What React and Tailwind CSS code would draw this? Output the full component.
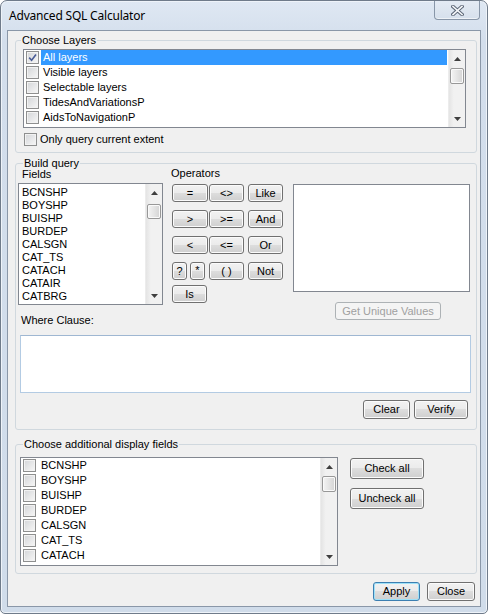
import React from "react";

const BTN =
  "flex items-center justify-center rounded-[3px] border border-[#707070] bg-[linear-gradient(#f2f2f2_0%,#ebebeb_50%,#dddddd_50%,#cfcfcf_100%)] shadow-[inset_0_0_0_1px_#fbfbfb] text-black leading-none";

function Btn({ className = "", children }) {
  return <div className={`${BTN} ${className}`}>{children}</div>;
}

function Check({ checked }) {
  return (
    <div className="w-[13px] h-[13px] shrink-0 border border-[#8e8f8f] bg-[linear-gradient(135deg,#d3d5d8,#f7f7f7)] shadow-[inset_0_0_0_1px_#f2f2f2] flex items-center justify-center">
      {checked && (
        <svg width="9" height="9" viewBox="0 0 9 9">
          <path d="M1.2 4.6 L3.6 7.2 L8 1.4" fill="none" stroke="#4a5c96" strokeWidth="1.6" />
        </svg>
      )}
    </div>
  );
}

function ScrollBar({ thumbTop = 1, thumbH = 16 }) {
  return (
    <div className="w-[17px] shrink-0 flex flex-col bg-[linear-gradient(90deg,#e4e4e4,#f1f1f1_30%,#f1f1f1)] border-l border-[#ececec]">
      <div className="h-[17px] flex items-center justify-center shrink-0">
        <svg width="7" height="4" viewBox="0 0 7 4">
          <polygon points="0,4 3.5,0 7,4" fill="#3f3f3f" />
        </svg>
      </div>
      <div
        className="mx-[1px] shrink-0 rounded-[2px] border border-[#989898] bg-[linear-gradient(90deg,#f4f4f4,#e6e6e6_45%,#d4d4d4)] shadow-[inset_0_0_0_1px_#fafafa]"
        style={{ marginTop: thumbTop, height: thumbH }}
      />
      <div className="flex-1" />
      <div className="h-[17px] flex items-center justify-center shrink-0">
        <svg width="7" height="4" viewBox="0 0 7 4">
          <polygon points="0,0 3.5,4 7,0" fill="#3f3f3f" />
        </svg>
      </div>
    </div>
  );
}

const layers = ["All layers", "Visible layers", "Selectable layers", "TidesAndVariationsP", "AidsToNavigationP"];
const fields = ["BCNSHP", "BOYSHP", "BUISHP", "BURDEP", "CALSGN", "CAT_TS", "CATACH", "CATAIR", "CATBRG"];
const dispFields = ["BCNSHP", "BOYSHP", "BUISHP", "BURDEP", "CALSGN", "CAT_TS", "CATACH"];

export default function App() {
  return (
    <div className="w-[488px] h-[614px] font-['Liberation_Sans',Arial,sans-serif] text-[11px] leading-[13px] text-black">
      <div className="w-[488px] h-[614px] flex flex-col border border-[#6f7b8a] rounded-t-[7px] rounded-b-[5px] bg-[linear-gradient(#dfe8f3,#d3deec_40px,#d0dcea)] shadow-[inset_0_0_0_1px_#eef3f9] overflow-hidden">
        {/* Title bar */}
        <div className="h-[29px] flex items-start shrink-0">
          <div className="pl-[8px] pt-[7px] font-['Segoe_UI','Noto_Sans',sans-serif] text-[12px] leading-[16px] tracking-[-0.2px] text-black">
            Advanced SQL Calculator
          </div>
          <div className="ml-auto mr-[7px] w-[46px] h-[19px] rounded-b-[4px] border border-t-0 border-[#8896a8] bg-[linear-gradient(#e4ebf4,#d6e0ec)] shadow-[inset_0_-1px_0_#eef2f7] flex items-center justify-center">
            <svg width="13" height="11" viewBox="0 0 13 11">
              <path d="M2 1.5 L11 9.5 M11 1.5 L2 9.5" stroke="#5d6878" strokeWidth="3.6" strokeLinecap="square" />
              <path d="M2 1.5 L11 9.5 M11 1.5 L2 9.5" stroke="#f6f8fb" strokeWidth="1.6" strokeLinecap="square" />
            </svg>
          </div>
        </div>

        {/* Client area */}
        <div className="ml-[6px] w-[474px] h-[577px] shrink-0 border border-[#8a97a8] bg-[#f0f0f0] flex flex-col overflow-hidden">
          {/* Choose Layers */}
          <fieldset className="ml-[7px] mt-[3px] w-[462px] rounded-[3px] border border-[#d0d8de]">
            <legend className="ml-[5px] px-[1px] leading-[13px]">Choose Layers</legend>
            <div className="flex flex-col">
              <div className="ml-[7px] mt-[2px] w-[443px] h-[79px] border border-[#828790] bg-white flex">
                <div className="flex-1 flex flex-col">
                  {layers.map((l, i) => (
                    <div key={l} className="h-[15px] flex items-center">
                      <div className="ml-[2px]">
                        <Check checked={i === 0} />
                      </div>
                      <div
                        className={`ml-[2px] h-[15px] flex items-center px-[2px] ${
                          i === 0 ? "flex-1 mr-[1px] bg-[#3399ff] text-white" : ""
                        }`}
                      >
                        {l}
                      </div>
                    </div>
                  ))}
                </div>
                <ScrollBar thumbTop={1} thumbH={16} />
              </div>
              <div className="mt-[4px] ml-[8px] h-[15px] flex items-center gap-[3px]">
                <Check />
                <span>Only query current extent</span>
              </div>
              <div className="h-[5px]" />
            </div>
          </fieldset>

          {/* Build query */}
          <fieldset className="ml-[7px] mt-[4px] w-[462px] rounded-[3px] border border-[#d0d8de]">
            <legend className="ml-[7px] px-[1px] leading-[13px]">Build query</legend>
            <div className="flex flex-col">
              <div className="flex items-start">
                {/* Fields */}
                <div className="ml-[2px] w-[145px] flex flex-col">
                  <div className="mt-[-2px] pl-[4px] leading-[13px]">Fields</div>
                  <div className="mt-[2px] h-[122px] border border-[#828790] bg-white flex">
                    <div className="flex-1 flex flex-col pl-[3px] pt-[2px]">
                      {fields.map((f) => (
                        <div key={f} className="h-[13px] leading-[13px]">
                          {f}
                        </div>
                      ))}
                    </div>
                    <ScrollBar thumbTop={3} thumbH={15} />
                  </div>
                </div>

                {/* Operators */}
                <div className="ml-[9px] w-[111px] flex flex-col">
                  <div className="mt-[-3px] ml-[-1px] leading-[13px]">Operators</div>
                  <div className="mt-[4px] flex flex-col gap-[8px]">
                    <div className="flex h-[18px]">
                      <Btn className="w-[36px]">=</Btn>
                      <Btn className="ml-[1px] w-[35px]">&lt;&gt;</Btn>
                      <Btn className="ml-[4px] w-[35px]">Like</Btn>
                    </div>
                    <div className="flex h-[18px]">
                      <Btn className="w-[36px]">&gt;</Btn>
                      <Btn className="ml-[1px] w-[35px]">&gt;=</Btn>
                      <Btn className="ml-[4px] w-[35px]">And</Btn>
                    </div>
                    <div className="flex h-[18px]">
                      <Btn className="w-[36px]">&lt;</Btn>
                      <Btn className="ml-[1px] w-[35px]">&lt;=</Btn>
                      <Btn className="ml-[4px] w-[35px]">Or</Btn>
                    </div>
                    <div className="flex h-[18px]">
                      <Btn className="w-[15px]">?</Btn>
                      <Btn className="ml-[3px] w-[15px] items-start pt-[2px]">*</Btn>
                      <Btn className="ml-[4px] w-[35px]">( )</Btn>
                      <Btn className="ml-[4px] w-[35px]">Not</Btn>
                    </div>
                  </div>
                  <Btn className="mt-[5px] w-[35px] h-[18px]">Is</Btn>
                </div>

                {/* Values */}
                <div className="ml-[10px] w-[177px] flex flex-col">
                  <div className="mt-[14px] h-[108px] border border-[#828790] bg-white" />
                  <div className="mt-[10px] ml-[42px] w-[106px] h-[18px] rounded-[3px] border border-[#adb2b5] bg-[#f4f4f4] text-[#a0a0a0] flex items-center justify-center leading-none">
                    Get Unique Values
                  </div>
                </div>
              </div>

              <div className="mt-[-6px] pl-[5px] leading-[13px]">Where Clause:</div>
              <div className="mt-[8px] ml-[4px] w-[451px] h-[58px] bg-white border border-[#b3cbe3] border-t-[#9fb7d2]" />
              <div className="mt-[7px] flex justify-end gap-[4px] pr-[8px]">
                <Btn className="w-[47px] h-[19px]">Clear</Btn>
                <Btn className="w-[54px] h-[19px]">Verify</Btn>
              </div>
              <div className="h-[10px]" />
            </div>
          </fieldset>

          {/* Choose additional display fields */}
          <fieldset className="ml-[7px] mt-[8px] w-[462px] rounded-[3px] border border-[#d0d8de]">
            <legend className="ml-[7px] px-[1px] leading-[13px]">Choose additional display fields</legend>
            <div className="flex items-start">
              <div className="mt-[6px] ml-[4px] w-[318px] h-[109px] border border-[#828790] bg-white flex">
                <div className="flex-1 flex flex-col">
                  {dispFields.map((f) => (
                    <div key={f} className="h-[15px] flex items-center">
                      <div className="ml-[2px]">
                        <Check />
                      </div>
                      <span className="ml-[5px]">{f}</span>
                    </div>
                  ))}
                </div>
                <ScrollBar thumbTop={1} thumbH={16} />
              </div>
              <div className="ml-[12px] mt-[7px] flex flex-col gap-[9px]">
                <Btn className="w-[74px] h-[21px]">Check all</Btn>
                <Btn className="w-[74px] h-[21px]">Uncheck all</Btn>
              </div>
            </div>
            <div className="h-[7px]" />
          </fieldset>

          <div className="mt-[8px] flex justify-end gap-[7px] pr-[5px]">
            <div className="w-[47px] h-[19px] flex items-center justify-center rounded-[3px] border border-[#3c7fb1] bg-[linear-gradient(#f2f2f2_0%,#ebebeb_50%,#dddddd_50%,#cfcfcf_100%)] shadow-[inset_0_0_0_1px_#9ee1f8] leading-none">
              Apply
            </div>
            <Btn className="w-[48px] h-[19px]">Close</Btn>
          </div>
        </div>
      </div>
    </div>
  );
}
